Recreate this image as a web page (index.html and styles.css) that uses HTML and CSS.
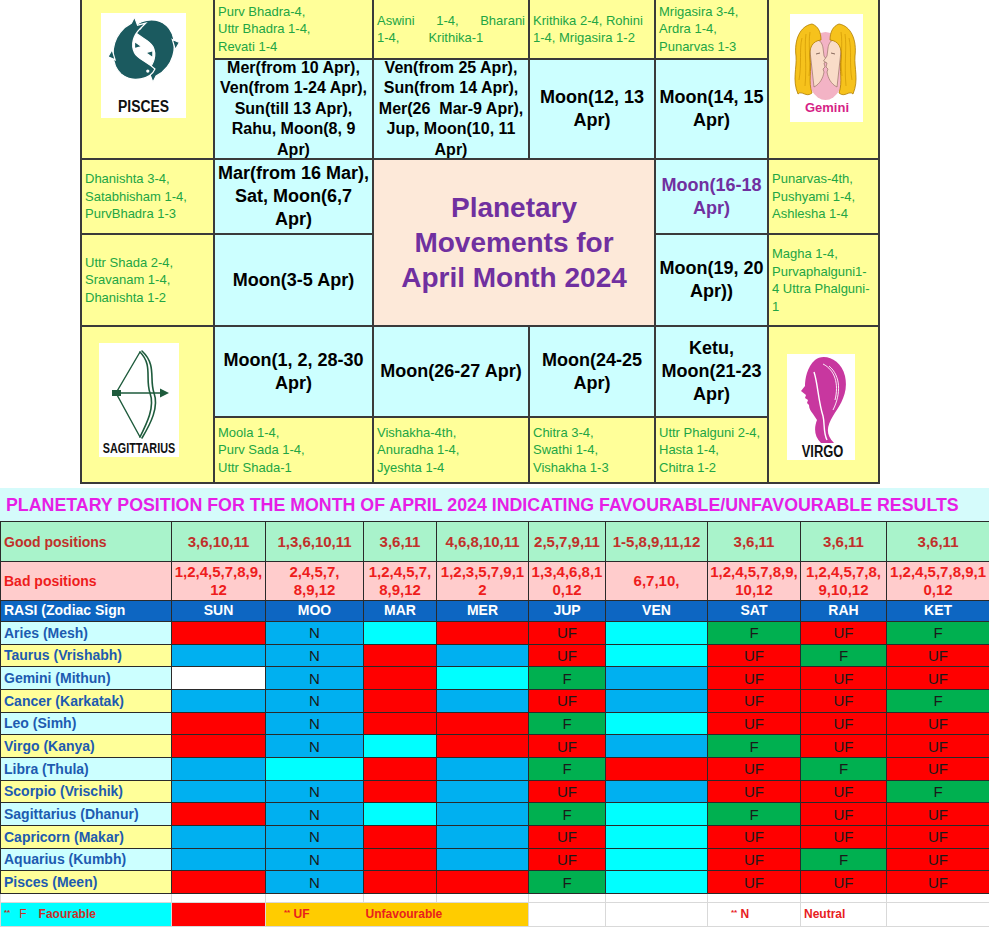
FILE: index.html
```html
<!DOCTYPE html>
<html>
<head>
<meta charset="utf-8">
<title>Planetary Movements April 2024</title>
<link rel="stylesheet" href="styles.css">
</head>
<body>
<div class="chart">
  <div class="cell img r2"><div class="box bx-pisces">
    <svg width="85" height="105" viewBox="0 0 85 105">
      <g transform="translate(7,4) scale(1.02)" fill="#1b5a5f" stroke="#fff" stroke-width="1.2">
        <g>
          <path d="M24 13 C28 3 46 -1 57 8 C67 17 68 36 58 49 C55 53 51 56 47 58 L44 64 L41 56 L33 58 L39 52 C45 46 48 37 44 29 C41 23 33 21 24 13 Z"/>
          <path d="M63 22 L70 25 L66 32 Z"/>
          <path d="M44 33 L37 35 L44 40 Z"/>
          <circle cx="31" cy="11" r="1.6" fill="#fff" stroke="none"/>
        </g>
        <g transform="rotate(180 35 32)">
          <path d="M24 13 C28 3 46 -1 57 8 C67 17 68 36 58 49 C55 53 51 56 47 58 L44 64 L41 56 L33 58 L39 52 C45 46 48 37 44 29 C41 23 33 21 24 13 Z"/>
          <path d="M63 22 L70 25 L66 32 Z"/>
          <path d="M44 33 L37 35 L44 40 Z"/>
          <circle cx="31" cy="11" r="1.6" fill="#fff" stroke="none"/>
        </g>
      </g>
      <text transform="translate(42.5,99) scale(0.87,1)" text-anchor="middle" class="zt" font-size="16">PISCES</text>
    </svg>
  </div></div>
  <div class="cell nak"><div>Purv Bhadra-4,<br>Uttr Bhadra 1-4,<br>Revati 1-4</div></div>
  <div class="cell nak"><div><div class="just">Aswini 1-4, Bharani</div><div>1-4,<span class="gap">Krithika-1</span></div></div></div>
  <div class="cell nak"><div>Krithika 2-4, Rohini<br>1-4, Mrigasira 1-2</div></div>
  <div class="cell nak"><div>Mrigasira 3-4,<br>Ardra 1-4,<br>Punarvas 1-3</div></div>
  <div class="cell img r2"><div class="box bx-gemini">
    <svg width="73" height="108" viewBox="0 0 73 108">
      <ellipse cx="35.5" cy="52" rx="20" ry="34" fill="#f3b3c5"/>
      <g>
        <path d="M19 28 C25 22 32 26 33 34 L34 42 L37.5 47 L34 49 L35 53 L33 55 L34 58 C33 64 30 70 24 73 Z" fill="#f9dcc8" stroke="#8a6458" stroke-width="0.6"/>
        <path d="M26 40 L30 39" stroke="#6a4a40" stroke-width="0.8"/>
        <path d="M22 10 C10 12 4 26 6 42 C7 54 2 66 8 80 C12 76 16 84 22 79 C18 68 22 56 20 44 C19 34 22 27 31 26 C31 18 28 12 22 10 Z" fill="#f6c21c" stroke="#b07d00" stroke-width="0.8"/>
        <path d="M12 24 C9 36 12 50 9 66 M16 20 C14 34 17 50 15 72 M20 18 C18 30 21 46 19 62" stroke="#c99000" stroke-width="0.6" fill="none"/>
      </g>
      <g transform="translate(71,0) scale(-1,1)">
        <path d="M19 28 C25 22 32 26 33 34 L34 42 L37.5 47 L34 49 L35 53 L33 55 L34 58 C33 64 30 70 24 73 Z" fill="#f9dcc8" stroke="#8a6458" stroke-width="0.6"/>
        <path d="M26 40 L30 39" stroke="#6a4a40" stroke-width="0.8"/>
        <path d="M22 10 C10 12 4 26 6 42 C7 54 2 66 8 80 C12 76 16 84 22 79 C18 68 22 56 20 44 C19 34 22 27 31 26 C31 18 28 12 22 10 Z" fill="#f6c21c" stroke="#b07d00" stroke-width="0.8"/>
        <path d="M12 24 C9 36 12 50 9 66 M16 20 C14 34 17 50 15 72 M20 18 C18 30 21 46 19 62" stroke="#c99000" stroke-width="0.6" fill="none"/>
      </g>
      <text x="37" y="98" text-anchor="middle" class="gem" font-size="13">Gemini</text>
    </svg>
  </div></div>

  <div class="cell pl sm"><div>Mer(from 10 Apr),<br>Ven(from 1-24 Apr),<br>Sun(till 13 Apr),<br>Rahu, Moon(8, 9<br>Apr)</div></div>
  <div class="cell pl sm"><div>Ven(from 25 Apr),<br>Sun(from 14 Apr),<br>Mer(26&nbsp; Mar-9 Apr),<br>Jup, Moon(10, 11<br>Apr)</div></div>
  <div class="cell pl"><div>Moon(12, 13<br>Apr)</div></div>
  <div class="cell pl"><div>Moon(14, 15<br>Apr)</div></div>

  <div class="cell nak"><div>Dhanishta 3-4,<br>Satabhisham 1-4,<br>PurvBhadra 1-3</div></div>
  <div class="cell pl"><div>Mar(from 16 Mar),<br>Sat, Moon(6,7<br>Apr)</div></div>
  <div class="cell title r2 c2"><div>Planetary<br>Movements for<br>April Month 2024</div></div>
  <div class="cell pl purple"><div>Moon(16-18<br>Apr)</div></div>
  <div class="cell nak"><div>Punarvas-4th,<br>Pushyami 1-4,<br>Ashlesha 1-4</div></div>

  <div class="cell nak"><div>Uttr Shada 2-4,<br>Sravanam 1-4,<br>Dhanishta 1-2</div></div>
  <div class="cell pl"><div>Moon(3-5 Apr)</div></div>
  <div class="cell pl"><div>Moon(19, 20<br>Apr))</div></div>
  <div class="cell nak"><div>Magha 1-4,<br>Purvaphalguni1-<br>4 Uttra Phalguni-<br>1</div></div>

  <div class="cell img r2"><div class="box bx-sag">
    <svg width="80" height="114" viewBox="0 0 80 114">
      <g stroke="#1e5b3c" fill="none" stroke-linecap="round">
        <path d="M41 9 L17 50 L41 94" stroke-width="1.4"/>
        <path d="M41 9 C54 22 46 36 51 50 C56 64 48 80 41 94" stroke-width="1.6"/>
        <path d="M43 8 C58 22 50 36 55 50 C60 64 52 80 43 95" stroke-width="1.6"/>
        <path d="M17 50 L64 50" stroke-width="1.6"/>
      </g>
      <path d="M61 45.5 L70 50 L61 54.5 Z" fill="#1e5b3c"/>
      <path d="M13 47 L22 47 L22 53 L13 53 Z" fill="#1e5b3c"/>
      <text transform="translate(40,110) scale(0.72,1)" text-anchor="middle" class="zt" font-size="15">SAGITTARIUS</text>
    </svg>
  </div></div>
  <div class="cell pl"><div>Moon(1, 2, 28-30<br>Apr)</div></div>
  <div class="cell pl"><div>Moon(26-27 Apr)</div></div>
  <div class="cell pl"><div>Moon(24-25<br>Apr)</div></div>
  <div class="cell pl"><div>Ketu,<br>Moon(21-23<br>Apr)</div></div>
  <div class="cell img r2"><div class="box bx-virgo">
    <svg width="68" height="106" viewBox="0 0 68 106">
      <path d="M28 6 C36 -1 54 4 58 22 C62 40 52 52 46 62 C40 72 38 80 47 89 L34 89 C27 82 27 74 30 66 L26 60 C24 57 22 55 22 51 L20 49 L21 46 L18 44 L19 41 L14 37 L18 32 C18 25 20 13 28 6 Z" fill="#c8379f"/>
      <path d="M27 18 C31 30 31 46 36 62 C38 70 36 78 40 86" stroke="#fff" stroke-width="1.4" fill="none"/>
      <path d="M36 10 C48 16 52 30 48 46 M42 12 C54 22 54 40 46 56" stroke="#fff" stroke-width="0.9" fill="none"/>
      <text transform="translate(35.5,103) scale(0.76,1)" text-anchor="middle" class="zt" font-size="17">VIRGO</text>
    </svg>
  </div></div>

  <div class="cell nak"><div>Moola 1-4,<br>Purv Sada 1-4,<br>Uttr Shada-1</div></div>
  <div class="cell nak"><div>Vishakha-4th,<br>Anuradha 1-4,<br>Jyeshta 1-4</div></div>
  <div class="cell nak"><div>Chitra 3-4,<br>Swathi 1-4,<br>Vishakha 1-3</div></div>
  <div class="cell nak"><div>Uttr Phalguni 2-4,<br>Hasta 1-4,<br>Chitra 1-2</div></div>
</div>

<table class="tbl">
  <colgroup>
    <col class="w0"><col class="w1"><col class="w2"><col class="w3"><col class="w4">
    <col class="w5"><col class="w6"><col class="w7"><col class="w8"><col class="w9">
  </colgroup>
  <tr class="h-ttl"><td colspan="10" class="ttl">PLANETARY POSITION FOR THE MONTH OF APRIL 2024 INDICATING FAVOURABLE/UNFAVOURABLE RESULTS</td></tr>
  <tr class="h-good">
    <td class="lbl good-l">Good positions</td>
    <td class="gv">3,6,10,11</td><td class="gv">1,3,6,10,11</td><td class="gv">3,6,11</td><td class="gv">4,6,8,10,11</td><td class="gv">2,5,7,9,11</td><td class="gv">1-5,8,9,11,12</td><td class="gv">3,6,11</td><td class="gv">3,6,11</td><td class="gv">3,6,11</td>
  </tr>
  <tr class="h-bad">
    <td class="lbl bad-l">Bad positions</td>
    <td class="bv">1,2,4,5,7,8,9,<br>12</td><td class="bv">2,4,5,7,<br>8,9,12</td><td class="bv">1,2,4,5,7,<br>8,9,12</td><td class="bv">1,2,3,5,7,9,1<br>2</td><td class="bv">1,3,4,6,8,1<br>0,12</td><td class="bv">6,7,10,</td><td class="bv">1,2,4,5,7,8,9,<br>10,12</td><td class="bv">1,2,4,5,7,8,<br>9,10,12</td><td class="bv">1,2,4,5,7,8,9,1<br>0,12</td>
  </tr>
  <tr class="h-hd">
    <td class="hd hd-l">RASI (Zodiac Sign</td>
    <td class="hd">SUN</td><td class="hd">MOO</td><td class="hd">MAR</td><td class="hd">MER</td><td class="hd">JUP</td><td class="hd">VEN</td><td class="hd">SAT</td><td class="hd">RAH</td><td class="hd">KET</td>
  </tr>
  <tr class="dr"><td class="rl cy">Aries (Mesh)</td><td class="r"></td><td class="b">N</td><td class="c"></td><td class="r"></td><td class="r">UF</td><td class="c"></td><td class="g">F</td><td class="r">UF</td><td class="g">F</td></tr>
  <tr class="dr"><td class="rl ye">Taurus (Vrishabh)</td><td class="b"></td><td class="b">N</td><td class="r"></td><td class="b"></td><td class="r">UF</td><td class="c"></td><td class="r">UF</td><td class="g">F</td><td class="r">UF</td></tr>
  <tr class="dr"><td class="rl cy">Gemini (Mithun)</td><td class="w"></td><td class="b">N</td><td class="r"></td><td class="c"></td><td class="g">F</td><td class="b"></td><td class="r">UF</td><td class="r">UF</td><td class="r">UF</td></tr>
  <tr class="dr"><td class="rl ye">Cancer (Karkatak)</td><td class="b"></td><td class="b">N</td><td class="r"></td><td class="b"></td><td class="r">UF</td><td class="b"></td><td class="r">UF</td><td class="r">UF</td><td class="g">F</td></tr>
  <tr class="dr"><td class="rl cy">Leo (Simh)</td><td class="r"></td><td class="b">N</td><td class="r"></td><td class="r"></td><td class="g">F</td><td class="c"></td><td class="r">UF</td><td class="r">UF</td><td class="r">UF</td></tr>
  <tr class="dr"><td class="rl ye">Virgo (Kanya)</td><td class="r"></td><td class="b">N</td><td class="c"></td><td class="r"></td><td class="r">UF</td><td class="b"></td><td class="g">F</td><td class="r">UF</td><td class="r">UF</td></tr>
  <tr class="dr"><td class="rl cy">Libra (Thula)</td><td class="b"></td><td class="c"></td><td class="r"></td><td class="b"></td><td class="g">F</td><td class="r"></td><td class="r">UF</td><td class="g">F</td><td class="r">UF</td></tr>
  <tr class="dr"><td class="rl ye">Scorpio (Vrischik)</td><td class="b"></td><td class="b">N</td><td class="r"></td><td class="b"></td><td class="r">UF</td><td class="b"></td><td class="r">UF</td><td class="r">UF</td><td class="g">F</td></tr>
  <tr class="dr"><td class="rl cy">Sagittarius (Dhanur)</td><td class="r"></td><td class="b">N</td><td class="c"></td><td class="b"></td><td class="g">F</td><td class="c"></td><td class="g">F</td><td class="r">UF</td><td class="r">UF</td></tr>
  <tr class="dr"><td class="rl ye">Capricorn (Makar)</td><td class="b"></td><td class="b">N</td><td class="r"></td><td class="b"></td><td class="r">UF</td><td class="c"></td><td class="r">UF</td><td class="r">UF</td><td class="r">UF</td></tr>
  <tr class="dr"><td class="rl cy">Aquarius (Kumbh)</td><td class="b"></td><td class="b">N</td><td class="r"></td><td class="b"></td><td class="r">UF</td><td class="c"></td><td class="r">UF</td><td class="g">F</td><td class="r">UF</td></tr>
  <tr class="dr"><td class="rl ye">Pisces (Meen)</td><td class="r"></td><td class="b">N</td><td class="r"></td><td class="r"></td><td class="g">F</td><td class="c"></td><td class="r">UF</td><td class="r">UF</td><td class="r">UF</td></tr>
  <tr class="h-gap"><td class="lt"></td><td class="lt"></td><td class="lt"></td><td class="lt"></td><td class="lt"></td><td class="lt"></td><td class="lt"></td><td class="lt"></td><td class="lt"></td><td class="lt"></td></tr>
  <tr class="h-leg">
    <td class="lg lg-cy"><span class="st">**</span><span class="lf">F</span><span class="lfv">Faourable</span></td>
    <td class="lg lg-red"></td>
    <td class="lg lg-or" colspan="3"><span class="st">**</span> UF<span class="uf2">Unfavourable</span></td>
    <td class="lg"></td>
    <td class="lg"></td>
    <td class="lg lg-n"><span class="st">**</span> N</td>
    <td class="lg lg-neu">Neutral</td>
    <td class="lg"></td>
  </tr>
</table>
</body>
</html>
```

FILE: styles.css
```css
* { box-sizing: border-box; }

body {
  margin: 0;
  background: #ffffff;
  font-family: "Liberation Sans", Arial, sans-serif;
}

/* ---------- chart ---------- */
.chart {
  display: grid;
  grid-template-columns: 131px 157px 154px 124px 111px 109px;
  grid-template-rows: 58px 98px 73px 90px 89px 64px;
  gap: 2px;
  padding: 0 2px 2px 2px;
  width: 800px;
  height: 484px;
  margin-left: 80px;
  background: #3a3a3a;
}

.cell {
  display: flex;
  align-items: center;
  overflow: visible;
  min-width: 0;
}

.r2 { grid-row: span 2; }
.c2 { grid-column: span 2; }

.nak {
  background: #ffff99;
  color: #22a544;
  font-size: 13px;
  line-height: 17.5px;
  padding: 0 3px;
}
.nak > div { width: 100%; }

.just {
  text-align: justify;
  text-align-last: justify;
}
.gap { margin-left: 29px; }

.pl {
  background: #ccffff;
  justify-content: center;
  text-align: center;
  font-weight: bold;
  font-size: 18px;
  line-height: 23px;
  color: #000;
  white-space: nowrap;
}
.pl.sm {
  font-size: 16px;
  line-height: 20.5px;
}
.pl.purple { color: #7030a0; }

.title {
  background: #fde9d9;
  justify-content: center;
  text-align: center;
  color: #7030a0;
  font-weight: bold;
  font-size: 28px;
  line-height: 35px;
}

.img {
  background: #ffff99;
  align-items: flex-start;
}

.box { background: #ffffff; }
.box svg { display: block; }
.bx-pisces { width: 85px; height: 105px; margin: 13px 0 0 19px; }
.bx-gemini { width: 73px; height: 108px; margin: 14px 0 0 21px; }
.bx-sag { width: 80px; height: 114px; margin: 16px 0 0 17px; }
.bx-virgo { width: 68px; height: 106px; margin: 27px 0 0 18px; }

.zt {
  font-family: "Liberation Sans", Arial, sans-serif;
  font-weight: bold;
  fill: #111;
}
.gem {
  font-family: "Liberation Sans", Arial, sans-serif;
  font-weight: bold;
  fill: #d61f86;
}

/* ---------- table ---------- */
.tbl {
  border-collapse: collapse;
  table-layout: fixed;
  width: 989px;
  margin-top: 4px;
  font-family: "Liberation Sans", Arial, sans-serif;
}
.w0 { width: 171px; }
.w1 { width: 94px; }
.w2 { width: 98px; }
.w3 { width: 73px; }
.w4 { width: 92px; }
.w5 { width: 77px; }
.w6 { width: 102px; }
.w7 { width: 93px; }
.w8 { width: 86px; }
.w9 { width: 103px; }

.tbl td {
  border: 1px solid #2a2a2a;
  padding: 0;
  white-space: nowrap;
  overflow: hidden;
}

.h-ttl { height: 33px; }
.h-good { height: 40px; }
.h-bad { height: 39px; }
.h-hd { height: 21px; }
.dr { height: 22.67px; }
.h-gap { height: 9px; }
.h-leg { height: 24px; }

.tbl td.ttl {
  background: #d5fbfb;
  color: #e61ee6;
  font-weight: bold;
  font-size: 17.8px;
  padding-left: 5px;
  border-top: 1px solid #d5fbfb;
  border-left: 1px solid #d5fbfb;
  border-right: 1px solid #d5fbfb;
}

.lbl {
  font-weight: bold;
  font-size: 14px;
  padding-left: 3px !important;
}
.good-l { background: #a9f3cb; color: #c0302a; }
.bad-l { background: #ffcccc; color: #ee1c1c; }

.gv {
  background: #a9f3cb;
  color: #c0302a;
  font-weight: bold;
  font-size: 15px;
  text-align: center;
}
.bv {
  background: #ffcccc;
  color: #ee1c1c;
  font-weight: bold;
  font-size: 15px;
  line-height: 18px;
  text-align: center;
}

.hd {
  background: #0d66c2;
  color: #ffffff;
  font-weight: bold;
  font-size: 14px;
  text-align: center;
  vertical-align: top;
  line-height: 19px;
}
.hd-l { text-align: left; padding-left: 3px !important; }

.rl {
  color: #1d5bb0;
  font-weight: bold;
  font-size: 14px;
  padding-left: 3px !important;
}
.cy { background: #ccffff; }
.ye { background: #ffff99; }

.dr td:not(.rl) {
  text-align: center;
  font-size: 15px;
  color: #1a1a1a;
}
.r { background: #ff0000; }
.b { background: #00b0f0; }
.c { background: #00ffff; }
.g { background: #00b050; }
.w { background: #ffffff; }

.tbl td.lt {
  border: 1px solid #d9d9d9;
  background: #ffffff;
}

.tbl td.lg {
  border: 1px solid #d9d9d9;
  color: #e8201e;
  font-weight: bold;
  font-size: 12px;
  background: #ffffff;
}
.tbl td.lg-cy { background: #00ffff; color: #c8302a; padding-left: 3px; }
.tbl td.lg-red { background: #ff0000; }
.tbl td.lg-or { background: #ffcc00; padding-left: 18px; }
.tbl td.lg-n { padding-left: 23px; }
.tbl td.lg-neu { padding-left: 3px; }

.st { font-size: 8px; vertical-align: 3px; }
.lf { margin-left: 9px; font-weight: normal; }
.lfv { margin-left: 12px; }
.uf2 { margin-left: 56px; }
```
